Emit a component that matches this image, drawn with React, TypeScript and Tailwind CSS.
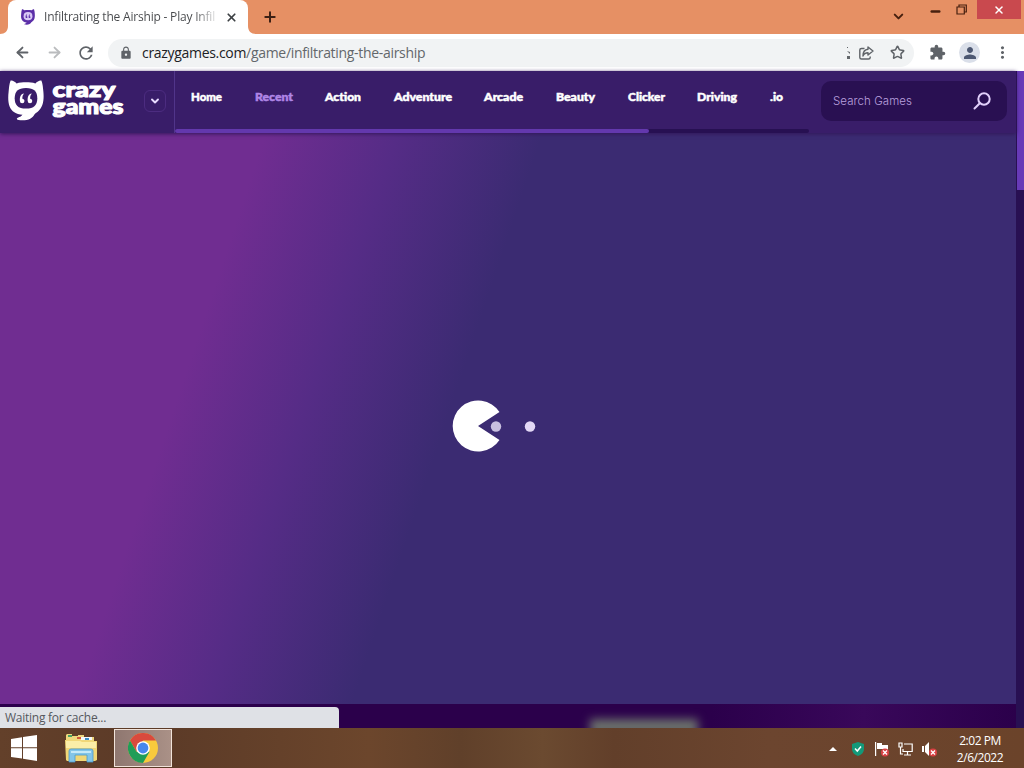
import React from "react";
import { ArrowLeft, ArrowRight, ChevronDown, Minus, Plus, Star, X } from "lucide-react";
import { MdExtension, MdLock, MdMoreVert, MdPerson, MdRefresh } from "react-icons/md";

const NAV_ITEMS = [
    { label: "Home", width: "w-[31px]" },
    { label: "Recent", width: "w-[38px]", active: true },
    { label: "Action", width: "w-[36px]" },
    { label: "Adventure", width: "w-[58px]" },
    { label: "Arcade", width: "w-[39px]" },
    { label: "Beauty", width: "w-[39px]" },
    { label: "Clicker", width: "w-[37px]" },
    { label: "Driving", width: "w-[40px]" },
    { label: ".io", width: "w-[13px]" },
];

function MascotIcon({ className, fill, inner }: { className: string; fill: string; inner: string }) {
    return (
        <svg viewBox="0 0 36 41" className={className}>
            <path
                d="M2.6 0.6C4.2 0 7 1.6 8.6 3.4C14 2 22 2 27.4 3.4C29 1.6 31.8 0 33.4 0.6C34.8 4 35 8 35.4 12C36.2 20 35 27.5 30 31.5C28 33 27.3 33.4 26.6 34.2C24.5 38.8 19 41 10.5 40C8.5 39.6 8.3 38.2 9.8 37.8C12 37 13.8 36 14.5 34.8C8 34.2 3.5 31.5 1.6 26.5C0 22 0 17 0.6 12C1 8 1.2 4 2.6 0.6Z"
                fill={fill}
            />
            <path d="M18 8C26 8 29.3 11.5 29.3 18.3C29.3 25.3 26 28.6 18 28.6C10 28.6 6.7 25.3 6.7 18.3C6.7 11.5 10 8 18 8Z" fill={inner} />
            <path d="M16 13.5C12.6 14 11.6 17 11.9 21A2.3 2.3 0 1 0 14.4 18.7C14.2 16.6 14.8 15 16 13.5ZM23.8 13.5C20.4 14 19.4 17 19.7 21A2.3 2.3 0 1 0 22.2 18.7C22 16.6 22.6 15 23.8 13.5Z" fill={fill} />
        </svg>
    );
}

function TabStrip() {
    return (
        <div className="flex h-[34px] bg-[#e69064]">
            <div className="relative ml-2 flex h-[34px] w-[240px] items-center rounded-t-lg bg-white pl-3">
                {/* Flared tab feet */}
                <svg viewBox="0 0 8 8" className="absolute -left-2 bottom-0 h-2 w-2"><path d="M8 0V8H0C5 8 8 5 8 0Z" fill="#fff" /></svg>
                <svg viewBox="0 0 8 8" className="absolute -right-2 bottom-0 h-2 w-2"><path d="M0 0V8H8C3 8 0 5 0 0Z" fill="#fff" /></svg>
                <MascotIcon className="h-4 w-4" fill="#5c2fa8" inner="#d9c9f5" />
                <span className="ml-2 w-[176px] whitespace-nowrap bg-linear-to-r from-[#45474a] from-85% to-transparent to-100% bg-clip-text font-['Open_Sans',sans-serif] text-[12px] leading-4 tracking-[-0.2px] text-transparent">
                    Infiltrating the Airship - Play Infil
                </span>
                <X className="ml-[5px] h-[13px] w-[13px] shrink-0 text-[#3c4043]" strokeWidth={3.2} />
            </div>
            <Plus className="ml-[14px] mt-[9px] h-4 w-4 text-[#3c2015]" strokeWidth={3} />
            <div className="ml-auto flex items-start text-[#47200f]">
                <ChevronDown className="mt-[9px] h-[15px] w-[15px]" strokeWidth={3.2} />
                <Minus className="ml-[23px] mt-[5px] h-[13px] w-[13px]" strokeWidth={4.5} />
                <svg viewBox="0 0 11 11" className="ml-[14px] mr-px mt-1 h-[11px] w-[11px]" fill="none" stroke="currentColor" strokeWidth="1.2">
                    <path d="M1 3H8.3V10H1ZM3 3V1H10.3V8H8.3" />
                </svg>
                <div className="ml-[9px] mr-[3px] flex h-[19px] w-[44px] items-center justify-center bg-[#c9494e]">
                    <X className="h-3 w-3 text-white" strokeWidth={3} />
                </div>
            </div>
        </div>
    );
}

function Toolbar() {
    return (
        <div className="flex h-[37px] items-center bg-white pl-[14px] text-[#5f6368]">
            <ArrowLeft className="h-[17px] w-[17px]" strokeWidth={2.6} />
            <ArrowRight className="ml-[15px] h-[17px] w-[17px] text-[#babcbe]" strokeWidth={2.6} />
            <MdRefresh className="ml-[13px] h-5 w-5" />
            <div className="ml-3 flex h-7 w-[806px] items-center rounded-full bg-[#f1f3f4] pl-[11px]">
                <MdLock className="h-[14px] w-[14px]" />
                <span className="ml-[9px] font-['Open_Sans',sans-serif] text-[14px] leading-5 tracking-[-0.31px] text-[#202124]">
                    crazygames.com<span className="text-[#63676b]">/game/infiltrating-the-airship</span>
                </span>
                <div className="ml-auto flex items-center pr-[9px]">
                    <svg viewBox="0 0 5 14" className="h-[14px] w-[5px]"><path d="M1 1H2V2H1ZM1 5L4 6V8L2 6ZM1 10H4V13H1Z" fill="#63676b" /></svg>
                    <svg viewBox="0 0 16 16" className="ml-[7px] h-4 w-4" fill="none" stroke="currentColor" strokeWidth="1.4" strokeLinejoin="round">
                        <path d="M6.5 3.5H3.5Q1.8 3.5 1.8 5V12.5Q1.8 14 3.5 14H10.5Q12.2 14 12.2 12.5V11.5" />
                        <path d="M10 2L15 6L10 10V7.8C7.2 7.8 5.8 9 5 11C5 7 6.8 4.6 10 4.3Z" />
                    </svg>
                    <Star className="ml-4 h-[15px] w-[15px]" strokeWidth={2.4} />
                </div>
            </div>
            <MdExtension className="ml-[15px] h-[17px] w-[17px]" />
            <div className="ml-[13px] flex h-[21px] w-[21px] items-center justify-center rounded-full bg-[#dadfe9]">
                <MdPerson className="h-[18px] w-[18px] text-[#4d5872]" />
            </div>
            <MdMoreVert className="ml-[13px] h-[19px] w-[19px]" />
        </div>
    );
}

function SiteHeader() {
    return (
        <header className="relative z-10 flex h-[62px] bg-[#391d69] shadow-[0_1px_4px_#32165a]">
            <div className="flex w-[175px] shrink-0 border-r border-[#51358a] pl-2">
                <MascotIcon className="mt-[9px] h-[41px] w-[36px]" fill="#ffffff" inner="#391d69" />
                <svg viewBox="0 0 74 46" className="ml-[7px] mt-[7px] h-[46px] w-[74px] overflow-visible">
                    <text fill="#fff" stroke="#fff" strokeWidth="1.1" strokeLinejoin="round" fontFamily="Lato, sans-serif" fontWeight="900" fontSize="21">
                        <tspan x="1.5" y="19" textLength="63" lengthAdjust="spacingAndGlyphs">crazy</tspan>
                        <tspan x="1.5" y="36" textLength="71" lengthAdjust="spacingAndGlyphs">games</tspan>
                    </text>
                </svg>
                <button className="ml-[19px] mt-[19px] flex h-[22px] w-[22px] items-center justify-center rounded-md border border-[#4c2c80]">
                    <ChevronDown className="h-3 w-3 text-[#e9dcff]" strokeWidth={3.8} />
                </button>
            </div>
            <div className="flex w-[634px] shrink-0 flex-col justify-between">
                <nav className="mt-[18px] flex gap-x-[32.6px] pl-4 font-[Lato,sans-serif] text-[11.5px] font-black leading-4 text-white">
                    {NAV_ITEMS.map(item => (
                        <a key={item.label} className={`${item.width} h-4`}>
                            <svg className="block h-4 w-full overflow-visible">
                                <text
                                    x="0"
                                    y="12"
                                    textLength="100%"
                                    lengthAdjust="spacingAndGlyphs"
                                    strokeWidth="0.5"
                                    className={item.active ? "fill-[#af86e6] stroke-[#af86e6]" : "fill-white stroke-white"}
                                >
                                    {item.label}
                                </text>
                            </svg>
                        </a>
                    ))}
                </nav>
                <div className="h-1 rounded-full bg-[#271052]">
                    <div className="h-1 w-[474px] rounded-full bg-[#6338ad]" />
                </div>
            </div>
            <div className="ml-3 mt-[10px] flex h-10 w-[186px] items-center justify-between rounded-[10px] bg-[#291052] pl-3 pr-4">
                <svg className="h-5 w-20 overflow-visible">
                    <text x="0" y="14" textLength="79" fontFamily="Inter, sans-serif" fontSize="11.5" fontWeight="300" fill="#b9a0df">Search Games</text>
                </svg>
                <svg viewBox="0 0 18 18" className="h-[18px] w-[18px]" fill="none" stroke="#e1d0fb" strokeWidth="2" strokeLinecap="round">
                    <circle cx="11" cy="7" r="5.7" />
                    <path d="M6.8 11.2L1.5 16.5" />
                </svg>
            </div>
        </header>
    );
}

function GameLoader() {
    return (
        <main className="flex flex-1 items-center bg-[linear-gradient(108.5deg,#702d91_22%,#552c86_33%,#3b2b72_45%)]">
            <svg viewBox="0 0 84 52" className="ml-[452px] mt-[15px] h-[52px] w-[84px]">
                <path d="M26 26L47.5 12A25.5 25.5 0 1 0 47.5 40Z" fill="#fff" />
                <circle cx="44" cy="26.5" r="5.2" fill="#c8bfdf" />
                <circle cx="78" cy="26.5" r="5.2" fill="#e3d8f5" />
            </svg>
        </main>
    );
}

function ExplorerIcon() {
    return (
        <svg viewBox="0 0 32 30" className="h-[30px] w-8">
            <path d="M1 2L2 1H7V3H13V2H19V4H29V8H1Z" fill="#eed77d" />
            <path d="M3 2H7V4H3Z" fill="#48a164" />
            <path d="M12 4H17V6H12Z" fill="#d05a3a" />
            <path d="M16 4H27V7H16Z" fill="#f5fafa" />
            <path d="M20 5H24V7H20Z" fill="#3a8ec9" />
            <path d="M0 7H15L17 8H32V27L30 28H2L1 27Z" fill="#f1d777" />
            <path d="M1 8H15L17 9H31V15H1Z" fill="#fbeea8" />
            <path d="M4 29V18Q4 16 6 16H26Q28 16 28 18V29H22V22H10V29Z" fill="#83c5e9" stroke="#4a9acc" strokeWidth="0.8" />
            <path d="M6 18H26V20H6Z" fill="#c6e9f8" />
        </svg>
    );
}

function ChromeIcon() {
    return (
        <svg viewBox="0 0 30 30" className="h-[30px] w-[30px]">
            <circle cx="15" cy="15" r="15" fill="#f9ca3c" />
            <path d="M2 7.5A15 15 0 0 1 28 7.5H15L8.5 18.7Z" fill="#d94a3d" />
            <path d="M2 7.5A15 15 0 0 0 15 30L21.5 18.7L8.5 18.7Z" fill="#1f9d58" />
            <circle cx="15" cy="15" r="6.8" fill="#fff" />
            <circle cx="15" cy="15" r="5.4" fill="#4887ed" />
        </svg>
    );
}

function ErrorBadge() {
    return (
        <g>
            <circle cx="11" cy="10.5" r="4" fill="#d84143" />
            <path d="M9 8.5L13 12.5M13 8.5L9 12.5" stroke="#fff" strokeWidth="1.3" />
        </g>
    );
}

function Taskbar() {
    return (
        <footer className="flex h-10 items-center bg-[linear-gradient(90deg,#63402a_0%,#5b3a27_15%,#6c462c_36%,#60402a_45%,#6b4a30_53%,#623f2a_60%,#6c452f_75%,#6b432a_100%)]">
            <svg viewBox="0 0 26 26" className="ml-[11px] h-[26px] w-[26px]" fill="#fff">
                <path d="M0 4L11 2.3V12.3H0ZM12 2.1L26 0V12.3H12ZM0 13.3H11V23.5L0 22ZM12 13.3H26V26L12 23.8Z" />
            </svg>
            <div className="ml-7"><ExplorerIcon /></div>
            <div className="ml-[17px] flex h-[38px] w-[58px] items-center justify-center border border-[#f1e3da] bg-linear-to-r from-[#8f7770] to-[#aa9187]">
                <ChromeIcon />
            </div>
            <div className="ml-auto flex items-center">
                <svg viewBox="0 0 8 4" className="mt-[2px] h-1 w-2"><path d="M0 4L4 0L8 4Z" fill="#fff" /></svg>
                <svg viewBox="0 0 12 14" className="ml-[15px] mt-[2px] h-[14px] w-3">
                    <path d="M6 0L12 2V7Q12 12 6 14Q0 12 0 7V2Z" fill="#139979" />
                    <path d="M3 6.5L5.3 9L9 4.5" fill="none" stroke="#fff" strokeWidth="1.5" />
                </svg>
                <svg viewBox="0 0 15 15" className="ml-[10px] mt-[2px] h-[15px] w-[15px]">
                    <path d="M1 0H2.2V14H1ZM3 1H8V3H14V8H9V7H3Z" fill="#fff" />
                    <ErrorBadge />
                </svg>
                <svg viewBox="0 0 15 14" className="ml-[9px] mt-px h-[14px] w-[15px]" fill="none" stroke="#fff" strokeWidth="1.2">
                    <path d="M6 2H14.2V9.5H5V7M9.5 10V12.5M6 13H13M1 1H4V5H1ZM2.5 5V12H5" />
                </svg>
                <svg viewBox="0 0 15 15" className="ml-[9px] mt-[2px] h-[15px] w-[15px]">
                    <path d="M0 4H2V10H0ZM3 4L7 0V14L3 10Z" fill="#fff" />
                    <ErrorBadge />
                </svg>
                <div className="ml-[18px] mr-[19px] mt-[2px] flex w-[50px] flex-col items-center whitespace-nowrap font-['Open_Sans',sans-serif] text-[12px] leading-[17px] tracking-[-0.45px] text-white">
                    <span>2:02 PM</span>
                    <span>2/6/2022</span>
                </div>
            </div>
        </footer>
    );
}

export default function App() {
    return (
        <div className="flex h-screen w-full flex-col overflow-hidden">
            <TabStrip />
            <Toolbar />
            <div className="flex min-h-0 flex-1">
                <div className="flex min-w-0 flex-1 flex-col">
                    <SiteHeader />
                    <GameLoader />
                    <div className="relative h-6 overflow-hidden bg-linear-to-r from-[#2b004b] from-70% via-[#39085a] via-85% to-[#2b004b]">
                        <div className="absolute left-[590px] top-[15px] h-4 w-[108px] bg-[#6b716b] blur-[5px]" />
                        {/* Browser status bubble */}
                        <div className="absolute bottom-0 left-0 h-[21px] w-[339px] rounded-tr bg-[#dfe1e6] pl-[5px] font-['Open_Sans',sans-serif] text-[12px] leading-[21px] tracking-[-0.25px] text-[#55585d]">
                            Waiting for cache...
                        </div>
                    </div>
                </div>
                <div className="w-2 border-l border-[#281052] bg-[#281052]">
                    <div className="h-[119px] bg-[#673ab7]" />
                </div>
            </div>
            <Taskbar />
        </div>
    );
}
